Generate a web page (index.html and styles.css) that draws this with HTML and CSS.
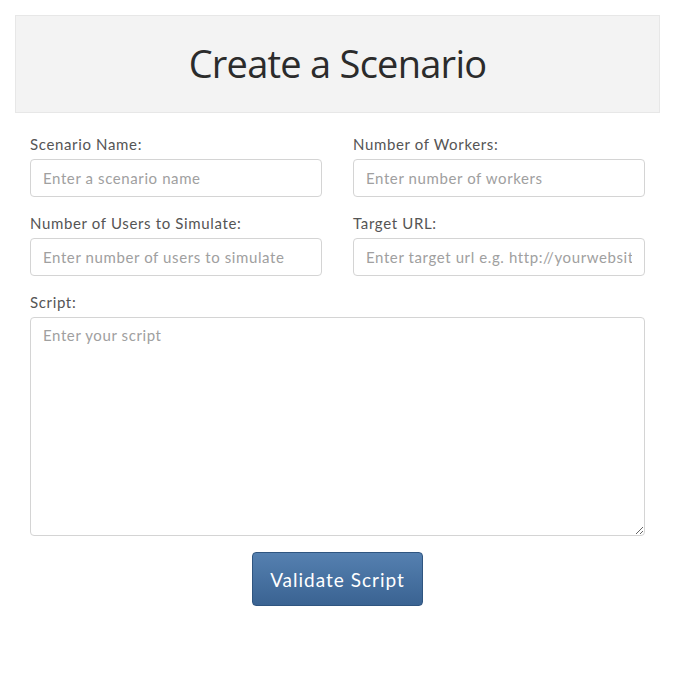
FILE: index.html
```html
<!DOCTYPE html>
<html>
<head>
<meta charset="utf-8">
<link rel="stylesheet" href="styles.css">
</head>
<body>
<div class="container">
  <div class="jumbotron">
    <h1 class="title">Create a Scenario</h1>
  </div>
  <form class="form">
    <div class="grid">
      <div class="field">
        <label class="label">Scenario Name:</label>
        <input class="input" type="text" placeholder="Enter a scenario name">
      </div>
      <div class="field">
        <label class="label">Number of Workers:</label>
        <input class="input" type="text" placeholder="Enter number of workers">
      </div>
      <div class="field">
        <label class="label">Number of Users to Simulate:</label>
        <input class="input" type="text" placeholder="Enter number of users to simulate">
      </div>
      <div class="field">
        <label class="label">Target URL:</label>
        <input class="input" type="text" placeholder="Enter target url e.g. http://yourwebsite.com">
      </div>
    </div>
    <div class="field field-full">
      <label class="label">Script:</label>
      <textarea class="textarea" placeholder="Enter your script"></textarea>
    </div>
    <div class="actions">
      <button type="button" class="btn">Validate Script</button>
    </div>
  </form>
</div>
</body>
</html>
```
FILE: styles.css
```css
html, body {
  margin: 0;
  padding: 0;
  background: #ffffff;
}
body {
  font-family: "Open Sans", sans-serif;
  color: #333;
}
.container {
  padding: 15px 15px 0 15px;
}
.jumbotron {
  background: #f3f3f3;
  border: 1px solid #e7e7e7;
  height: 96px;
  display: flex;
  align-items: center;
  justify-content: center;
}
.title {
  margin: 0;
  font-family: "Open Sans", sans-serif;
  font-weight: 400;
  font-size: 38px;
  color: #2b2b2b;
  letter-spacing: -0.75px;
  position: relative;
  top: -1px;
}
.form {
  padding: 0 15px;
  margin-top: 21px;
}
.grid {
  display: grid;
  grid-template-columns: 1fr 1fr;
  column-gap: 31px;
  row-gap: 16px;
}
.field {
  display: flex;
  flex-direction: column;
}
.field-full {
  margin-top: 16px;
}
.label {
  font-family: "Lato", sans-serif;
  font-size: 15px;
  color: #555;
  letter-spacing: 0.65px;
  line-height: 20px;
  margin-bottom: 5px;
  height: 20px;
}
.input, .textarea {
  box-sizing: border-box;
  width: 100%;
  border: 1px solid #d4d4d4;
  border-radius: 4px;
  background: #fff;
  font-family: "Lato", sans-serif;
  font-size: 15px;
  letter-spacing: 0.6px;
  color: #555;
  padding: 6px 12px;
  margin: 0;
  outline: none;
}
.input {
  height: 38px;
}
.textarea {
  height: 219px;
  resize: vertical;
  padding-top: 8px;
}
.input::placeholder, .textarea::placeholder {
  color: #a0a0a0;
}
.actions {
  display: flex;
  justify-content: center;
  margin-top: 16px;
}
.btn {
  width: 171px;
  height: 54px;
  border: 1px solid #2f5580;
  border-radius: 4px;
  background: linear-gradient(#5580b0, #3a6392);
  color: #fff;
  font-family: "Lato", sans-serif;
  font-size: 19px;
  letter-spacing: 1px;
  cursor: pointer;
}
```
